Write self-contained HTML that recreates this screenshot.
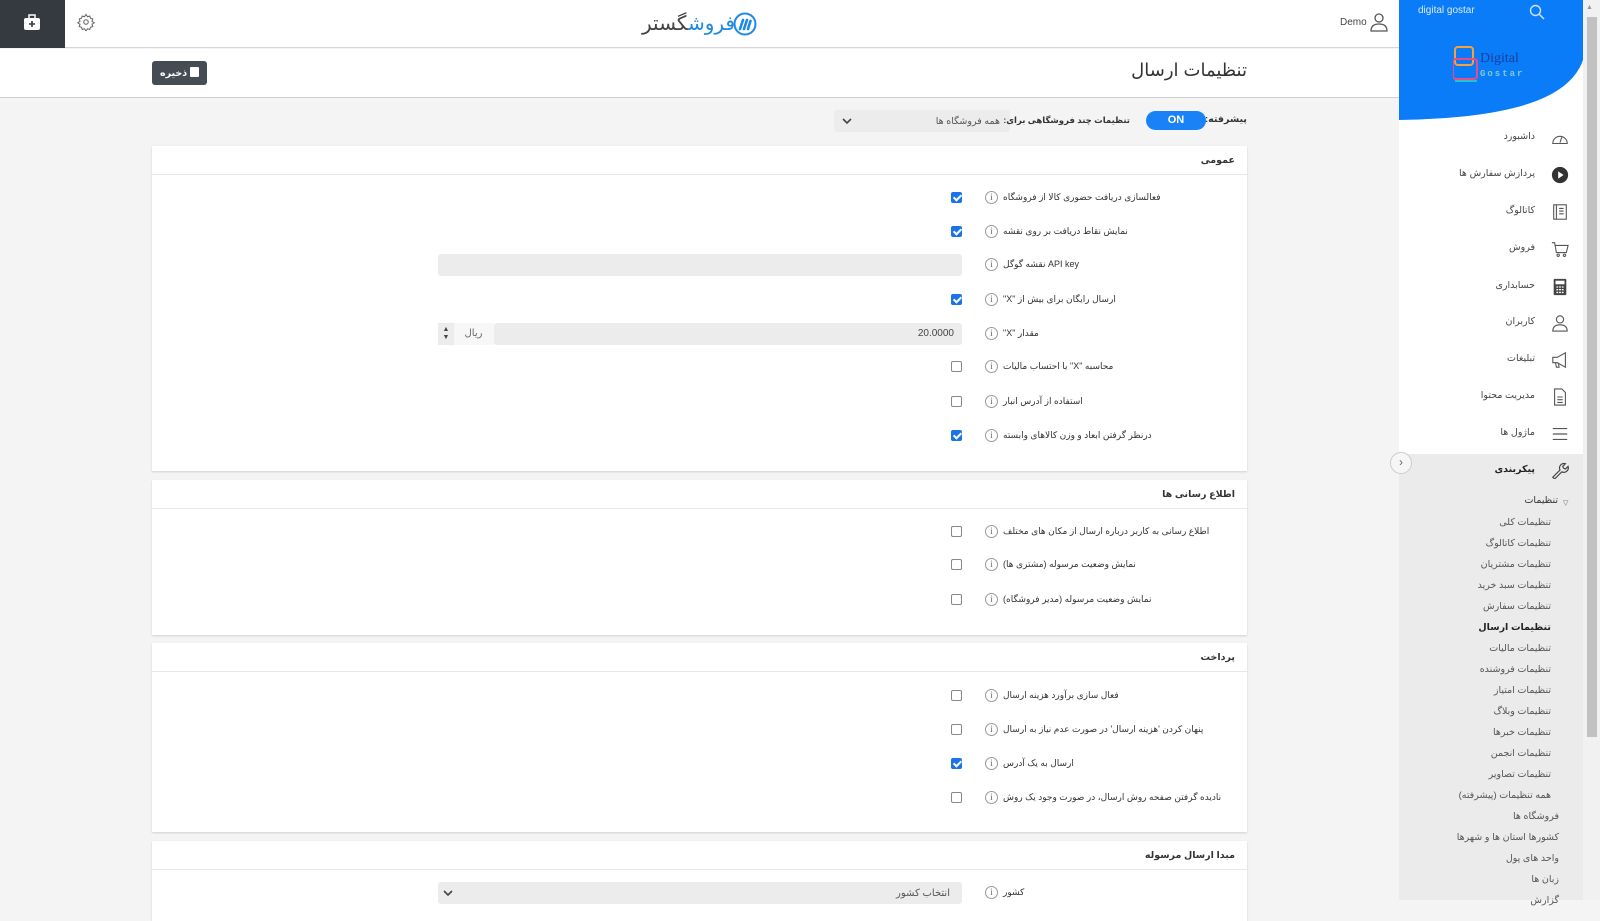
<!DOCTYPE html>
<html><head><meta charset="utf-8"><style>
*{box-sizing:border-box;margin:0;padding:0}
body{width:1600px;height:900px;overflow:hidden;background:#f4f4f4;font-family:"Liberation Sans","DejaVu Sans",sans-serif;font-size:10px;color:#333;position:relative}
.abs{position:absolute}
.top{left:0;top:0;width:1399px;height:48px;background:#fff;border-bottom:1px solid #d6d6d6}
.titlebar{left:0;top:49px;width:1399px;height:49px;background:#fff;border-bottom:1px solid #d0d0d0}
.card{position:absolute;left:152px;width:1095px;background:#fff;box-shadow:0 1px 2px rgba(0,0,0,.15)}
.card .hd{height:29px;border-bottom:1px solid #e8e8e8;direction:rtl;padding:9px 12px 0 0;font-weight:bold;font-size:9.5px;color:#333}
.row{position:absolute;left:0;width:1095px;height:20px}
.lbl{position:absolute;left:851px;top:4px;direction:rtl;white-space:nowrap;font-size:9px;color:#333}
.info{position:absolute;left:833px;top:3px;width:13px;height:13px;border:1px solid #999;border-radius:50%;font-size:9px;line-height:11px;text-align:center;color:#666;font-family:"Liberation Serif",serif}
.cb{position:absolute;left:799px;top:4px;width:11px;height:11px;border:1px solid #888;border-radius:2px;background:#fff}
.cb.on{background:#1a73e8;border-color:#1a73e8}
.cb.on:after{content:"";position:absolute;left:3px;top:0px;width:3px;height:6px;border:solid #fff;border-width:0 2px 2px 0;transform:rotate(45deg)}
.inp{position:absolute;left:286px;top:-1px;width:524px;height:22px;background:#ececec;border-radius:3px}
.side{left:1399px;top:0;width:184px;height:900px;background:#fff}
.mi{position:absolute;right:48px;direction:rtl;font-size:9.5px;color:#444;white-space:nowrap}
.ic{position:absolute;left:152px;width:18px;height:18px}
.sub{position:absolute;right:32px;direction:rtl;font-size:9.5px;color:#555;white-space:nowrap}
.sub2{position:absolute;right:24px;direction:rtl;font-size:9.5px;color:#555;white-space:nowrap}
</style></head><body>

<div class="abs top">
  <div class="abs" style="left:0;top:0;width:65px;height:48px;background:#343a40">
    <svg class="abs" style="left:23px;top:14px" width="18" height="17" viewBox="0 0 18 17"><rect x="1" y="4" width="16" height="12" rx="2" fill="#fff"/><rect x="6" y="1" width="6" height="4" fill="none" stroke="#fff" stroke-width="1.5"/><path d="M9 7v6M6 10h6" stroke="#343a40" stroke-width="1.6"/></svg>
  </div>
  <svg class="abs" style="left:77px;top:13px" width="18" height="18" viewBox="0 0 24 24" fill="none" stroke="#666" stroke-width="1.4"><circle cx="12" cy="12" r="3"/><path d="M12 2l2 3 3-1 1 3 3 1-1 3 3 2-3 2 1 3-3 1-1 3-3-1-2 3-2-3-3 1-1-3-3-1 1-3-3-2 3-2-1-3 3-1 1-3 3 1z"/></svg>
  <div class="abs" style="left:642px;top:11px;direction:rtl;font-size:20px;white-space:nowrap"><span style="color:#1e88e5">فروش</span><span style="color:#444">گستر</span></div>
  <svg class="abs" style="left:733px;top:12px" width="24" height="24" viewBox="0 0 24 24"><circle cx="12" cy="12" r="10.5" fill="none" stroke="#1e88e5" stroke-width="2"/><path d="M7 17l3-9M11 17l3-9M15 17l2.5-8" stroke="#1e88e5" stroke-width="2.6" stroke-linecap="round"/></svg>
  <div class="abs" style="left:1340px;top:17px;font-size:10px;color:#444">Demo</div>
  <svg class="abs" style="left:1370px;top:12px" width="18" height="20" viewBox="0 0 18 20" fill="none" stroke="#555" stroke-width="1.3"><circle cx="9" cy="6" r="4"/><path d="M1 19c0-5 3-7 8-7s8 2 8 7z"/></svg>
</div>

<div class="abs titlebar">
  <div class="abs" style="right:152px;top:11px;direction:rtl;font-size:18px;color:#333">تنظیمات ارسال</div>
  <div class="abs" style="left:152px;top:12px;width:55px;height:24px;background:#454c54;border-radius:3px;color:#fff;font-size:9.5px;font-weight:bold;direction:rtl;padding:6px 0 0 8px;text-align:left">
    <span style="display:inline-block;width:9px;height:10px;background:#fff;border-radius:1px;vertical-align:-1px;margin-left:3px"></span>ذخیره</div>
</div>

<div class="abs" style="right:353px;top:114px;direction:rtl;font-size:9.5px;font-weight:bold">پیشرفته:</div>
<div class="abs" style="left:1146px;top:111px;width:60px;height:19px;background:#1a82f7;border-radius:10px;color:#fff;font-weight:bold;text-align:center;line-height:19px;font-size:11px">ON</div>
<div class="abs" style="left:834px;top:110px;width:176px;height:22px;background:#ececec;border-radius:3px">
  <div class="abs" style="right:10px;top:6px;direction:rtl;color:#555;font-size:9.5px">همه فروشگاه ها</div>
  <svg class="abs" style="left:8px;top:7px" width="10" height="8" viewBox="0 0 10 8"><path d="M1 2l4 4 4-4" fill="none" stroke="#444" stroke-width="1.6"/></svg>
</div>
<div class="abs" style="right:470px;top:115px;direction:rtl;font-size:8.5px;font-weight:bold;white-space:nowrap;z-index:2">تنظیمات چند فروشگاهی برای:</div>

<div class="card" style="top:146px;height:325px">
  <div class="hd">عمومی</div>
  <div class="row" style="top:42px"><div class="lbl">فعالسازی دریافت حضوری کالا از فروشگاه</div><div class="info">i</div><div class="cb on"></div></div>
  <div class="row" style="top:76px"><div class="lbl">نمایش نقاط دریافت بر روی نقشه</div><div class="info">i</div><div class="cb on"></div></div>
  <div class="row" style="top:109px"><div class="lbl">API key نقشه گوگل</div><div class="info">i</div><div class="inp"></div></div>
  <div class="row" style="top:144px"><div class="lbl">ارسال رایگان برای بیش از "X"</div><div class="info">i</div><div class="cb on"></div></div>
  <div class="row" style="top:178px"><div class="lbl">مقدار "X"</div><div class="info">i</div>
    <div class="inp" style="left:342px;width:468px"><div class="abs" style="right:8px;top:5px;color:#444">20.0000</div></div>
    <div class="abs" style="left:301px;top:-1px;width:41px;height:22px;background:#f7f7f7;color:#666;text-align:center;line-height:22px;direction:rtl">ریال</div>
    <div class="abs" style="left:286px;top:-1px;width:16px;height:22px;background:#ececec;font-size:7px;line-height:8px;text-align:center;padding-top:3px;color:#444">▲<br>▼</div>
  </div>
  <div class="row" style="top:211px"><div class="lbl">محاسبه "X" با احتساب مالیات</div><div class="info">i</div><div class="cb"></div></div>
  <div class="row" style="top:246px"><div class="lbl">استفاده از آدرس انبار</div><div class="info">i</div><div class="cb"></div></div>
  <div class="row" style="top:280px"><div class="lbl">درنظر گرفتن ابعاد و وزن کالاهای وابسته</div><div class="info">i</div><div class="cb on"></div></div>
</div>

<div class="card" style="top:480px;height:155px">
  <div class="hd">اطلاع رسانی ها</div>
  <div class="row" style="top:42px"><div class="lbl">اطلاع رسانی به کاربر درباره ارسال از مکان های مختلف</div><div class="info">i</div><div class="cb"></div></div>
  <div class="row" style="top:75px"><div class="lbl">نمایش وضعیت مرسوله (مشتری ها)</div><div class="info">i</div><div class="cb"></div></div>
  <div class="row" style="top:110px"><div class="lbl">نمایش وضعیت مرسوله (مدیر فروشگاه)</div><div class="info">i</div><div class="cb"></div></div>
</div>

<div class="card" style="top:643px;height:189px">
  <div class="hd">پرداخت</div>
  <div class="row" style="top:43px"><div class="lbl">فعال سازی برآورد هزینه ارسال</div><div class="info">i</div><div class="cb"></div></div>
  <div class="row" style="top:77px"><div class="lbl">پنهان کردن 'هزینه ارسال' در صورت عدم نیاز به ارسال</div><div class="info">i</div><div class="cb"></div></div>
  <div class="row" style="top:111px"><div class="lbl">ارسال به یک آدرس</div><div class="info">i</div><div class="cb on"></div></div>
  <div class="row" style="top:145px"><div class="lbl">نادیده گرفتن صفحه روش ارسال، در صورت وجود یک روش</div><div class="info">i</div><div class="cb"></div></div>
</div>

<div class="card" style="top:841px;height:80px">
  <div class="hd">مبدا ارسال مرسوله</div>
  <div class="row" style="top:42px"><div class="lbl">کشور</div><div class="info">i</div>
    <div class="inp"><div class="abs" style="right:12px;top:6px;direction:rtl;color:#555">انتخاب کشور</div>
    <svg class="abs" style="left:5px;top:7px" width="10" height="8" viewBox="0 0 10 8"><path d="M1 2l4 4 4-4" fill="none" stroke="#444" stroke-width="1.6"/></svg></div>
  </div>
</div>

<div class="abs side">
  <svg class="abs" style="left:0;top:0" width="184" height="121" viewBox="0 0 184 121"><path d="M0 0H184V60C170 100 110 118 0 120Z" fill="#0a7cf7"/></svg>
  <div class="abs" style="left:19px;top:5px;color:#dbe9ff;font-size:10px">digital gostar</div>
  <svg class="abs" style="left:130px;top:4px" width="16" height="16" viewBox="0 0 16 16" fill="none" stroke="#cfe2ff" stroke-width="1.4"><circle cx="6.5" cy="6.5" r="5"/><path d="M10 10l5 5"/></svg>
  <svg class="abs" style="left:54px;top:45px" width="80" height="40" viewBox="0 0 80 40"><rect x="2" y="2" width="18" height="18" rx="3" fill="none" stroke="#f7a13a" stroke-width="2"/><rect x="0" y="14" width="24" height="20" rx="3" fill="none" stroke="#e94a8a" stroke-width="2"/><path d="M2 36h22" stroke="#22c1d6" stroke-width="2"/><text x="27" y="17" font-family="Liberation Serif" font-size="14" fill="#1a3fa0">Digital</text><text x="27" y="31" font-family="Liberation Mono" font-size="9" font-weight="bold" fill="#7ec8e3" letter-spacing="2">Gostar</text></svg>

  <div class="mi" style="top:131px">داشبورد</div>
  <svg class="ic" style="top:130px" viewBox="0 0 20 20" fill="none" stroke="#555" stroke-width="1.2"><path d="M2 15a8 8 0 1 1 16 0z"/><path d="M10 14l2-6"/></svg>
  <div class="mi" style="top:168px">پردازش سفارش ها</div>
  <svg class="ic" style="top:166px" viewBox="0 0 20 20"><circle cx="10" cy="10" r="9" fill="#333"/><path d="M8 6l6 4-6 4z" fill="#fff"/></svg>
  <div class="mi" style="top:205px">کاتالوگ</div>
  <svg class="ic" style="top:203px" viewBox="0 0 20 20" fill="none" stroke="#555" stroke-width="1.2"><rect x="3" y="2" width="14" height="16"/><path d="M6 2v16M9 6h5M9 9h5M9 12h5"/></svg>
  <div class="mi" style="top:242px">فروش</div>
  <svg class="ic" style="top:240px" viewBox="0 0 20 20" fill="none" stroke="#555" stroke-width="1.2"><path d="M1 3h3l2 11h11l2-8H5"/><circle cx="8" cy="17" r="1.3"/><circle cx="15" cy="17" r="1.3"/></svg>
  <div class="mi" style="top:280px">حسابداری</div>
  <svg class="ic" style="top:278px" viewBox="0 0 20 20"><rect x="3" y="1" width="14" height="18" rx="1" fill="#444"/><rect x="5" y="3" width="10" height="4" fill="#fff"/><path d="M6 10h2M9 10h2M12 10h2M6 13h2M9 13h2M12 13h2M6 16h2M9 16h2M12 16h2" stroke="#fff" stroke-width="1.5"/></svg>
  <div class="mi" style="top:316px">کاربران</div>
  <svg class="ic" style="top:314px" viewBox="0 0 20 20" fill="none" stroke="#555" stroke-width="1.2"><circle cx="10" cy="6" r="4"/><path d="M2 19c0-5 3-7 8-7s8 2 8 7z"/></svg>
  <div class="mi" style="top:353px">تبلیغات</div>
  <svg class="ic" style="top:351px" viewBox="0 0 20 20" fill="none" stroke="#555" stroke-width="1.2"><path d="M2 7h5l9-5v16l-9-5H2z M5 13l1 5h3l-1-5"/></svg>
  <div class="mi" style="top:390px">مدیریت محتوا</div>
  <svg class="ic" style="top:388px" viewBox="0 0 20 20" fill="none" stroke="#555" stroke-width="1.2"><path d="M4 1h8l4 4v14H4z M7 10h6M7 13h6M7 16h6"/></svg>
  <div class="mi" style="top:427px">ماژول ها</div>
  <svg class="ic" style="top:425px" viewBox="0 0 20 20" stroke="#555" stroke-width="1.3"><path d="M2 4h16M2 10h16M2 16h16"/></svg>

  <div class="abs" style="left:0;top:454px;width:184px;height:446px;background:#ebebeb"></div>
  <div class="mi" style="top:464px;font-weight:bold;color:#222">پیکربندی</div>
  <svg class="ic" style="top:461px" viewBox="0 0 20 20" fill="none" stroke="#444" stroke-width="1.3"><path d="M2 18l8-8a5 5 0 0 1 6-7l-3 3 1 2 2 1 3-3a5 5 0 0 1-7 6l-8 8z"/></svg>
  <div class="sub2" style="top:495px;right:25px;color:#333">تنظیمات</div>
  <div class="abs" style="left:164px;top:499px;font-size:7px;color:#666">▽</div>
  <div class="sub" style="top:517px">تنظیمات کلی</div>
  <div class="sub" style="top:538px">تنظیمات کاتالوگ</div>
  <div class="sub" style="top:559px">تنظیمات مشتریان</div>
  <div class="sub" style="top:580px">تنظیمات سبد خرید</div>
  <div class="sub" style="top:601px">تنظیمات سفارش</div>
  <div class="sub" style="top:622px;color:#222;font-weight:bold">تنظیمات ارسال</div>
  <div class="sub" style="top:643px">تنظیمات مالیات</div>
  <div class="sub" style="top:664px">تنظیمات فروشنده</div>
  <div class="sub" style="top:685px">تنظیمات امتیاز</div>
  <div class="sub" style="top:706px">تنظیمات وبلاگ</div>
  <div class="sub" style="top:727px">تنظیمات خبرها</div>
  <div class="sub" style="top:748px">تنظیمات انجمن</div>
  <div class="sub" style="top:769px">تنظیمات تصاویر</div>
  <div class="sub" style="top:790px">همه تنظیمات (پیشرفته)</div>
  <div class="sub2" style="top:811px">فروشگاه ها</div>
  <div class="sub2" style="top:832px">کشورها استان ها و شهرها</div>
  <div class="sub2" style="top:853px">واحد های پول</div>
  <div class="sub2" style="top:874px">زبان ها</div>
  <div class="sub2" style="top:895px">گزارش</div>
</div>
<div class="abs" style="left:1390px;top:452px;width:22px;height:22px;border:1px solid #ccc;border-radius:50%;background:#f6f6f6;text-align:center;line-height:19px;color:#666;font-size:12px">›</div>

<div class="abs" style="left:1583px;top:0;width:17px;height:900px;background:#f1f1f1"></div>
<div class="abs" style="left:1586px;top:4px;font-size:7px;color:#999">▲</div>
<div class="abs" style="left:1587px;top:17px;width:10px;height:720px;background:#c1c1c1"></div>
</body></html>
